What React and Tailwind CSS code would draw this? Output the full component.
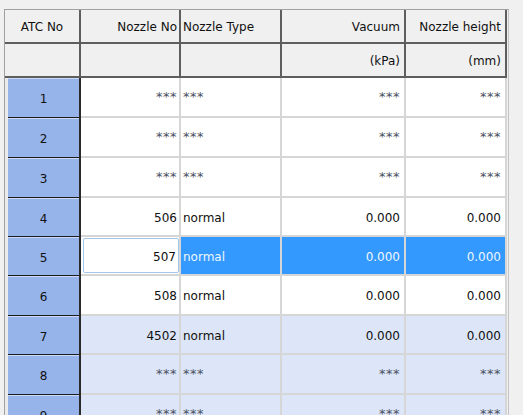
import React from "react";

const rows = [
  { n: "1", no: "***", type: "***", vac: "***", ht: "***", h: "h-[40px]", tint: false },
  { n: "2", no: "***", type: "***", vac: "***", ht: "***", h: "h-[40px]", tint: false },
  { n: "3", no: "***", type: "***", vac: "***", ht: "***", h: "h-[40px]", tint: false },
  { n: "4", no: "506", type: "normal", vac: "0.000", ht: "0.000", h: "h-[39px]", tint: false },
  { n: "5", no: "507", type: "normal", vac: "0.000", ht: "0.000", h: "h-[39px]", tint: false, sel: true },
  { n: "6", no: "508", type: "normal", vac: "0.000", ht: "0.000", h: "h-[40px]", tint: false },
  { n: "7", no: "4502", type: "normal", vac: "0.000", ht: "0.000", h: "h-[39px]", tint: true },
  { n: "8", no: "***", type: "***", vac: "***", ht: "***", h: "h-[40px]", tint: true },
  { n: "9", no: "***", type: "***", vac: "***", ht: "***", h: "h-[40px]", tint: true },
];

function Val({ v }) {
  if (v === "***") {
    return <span className="text-[13px] text-[#4a5060] tracking-[0.5px] -mt-[3px]">***</span>;
  }
  return <span>{v}</span>;
}

function HeaderRow({ cells }) {
  return (
    <div className="flex h-[34px]">
      <div className="w-[76px] shrink-0 flex items-center justify-center pt-[2px] bg-[#f0f0f0] border-r-2 border-b-2 border-[#5e5e5e]">
        {cells[0]}
      </div>
      <div className="w-[100px] shrink-0 flex items-center justify-end pr-[2px] pt-[2px] bg-[#f0f0f0] border-r-2 border-b-2 border-[#5e5e5e]">
        {cells[1]}
      </div>
      <div className="w-[101px] shrink-0 flex items-center justify-start pl-[2px] pt-[2px] bg-[#f0f0f0] border-r-2 border-b-2 border-[#5e5e5e]">
        {cells[2]}
      </div>
      <div className="w-[124px] shrink-0 flex items-center justify-end pr-[4px] pt-[2px] bg-[#f0f0f0] border-r-2 border-b-2 border-[#5e5e5e]">
        {cells[3]}
      </div>
      <div className="w-[101px] shrink-0 flex items-center justify-end pr-[4px] pt-[2px] bg-[#f0f0f0] border-r-2 border-b-2 border-[#5e5e5e]">
        {cells[4]}
      </div>
    </div>
  );
}

function DataRow({ r }) {
  const base = r.tint ? "bg-[#dce6f8]" : "bg-white";
  const selCell = r.sel ? "bg-[#3399ff] text-[#eef6ff]" : base;
  return (
    <div className={`flex ${r.h}`}>
      <div className="w-[76px] shrink-0 pl-[3px] bg-[#ebebeb] border-r-2 border-[#2a2a2a]">
        <div className="h-full flex items-center justify-center pt-[2px] bg-[#97b4ea] border-t border-t-[#c9d9f7] border-b border-b-[#1c1c1c]">
          {r.n}
        </div>
      </div>
      <div className={`w-[100px] shrink-0 ${base} border-r-2 border-b-2 border-[#d6d6d6] flex`}>
        {r.sel ? (
          <div className="flex-1 ml-[2px] mt-[1px] mb-[1px] flex items-center justify-end pr-[2px] pt-[2px] bg-white border border-[#a3c6ea] rounded-[2px]">
            {r.no}
          </div>
        ) : (
          <div className="flex-1 flex items-center justify-end pr-[2px] pt-[2px]">
            <Val v={r.no} />
          </div>
        )}
      </div>
      <div className={`w-[101px] shrink-0 ${selCell} border-r-2 border-b-2 border-[#d6d6d6] flex items-center justify-start pl-[2px] pt-[2px]`}>
        <Val v={r.type} />
      </div>
      <div className={`w-[124px] shrink-0 ${selCell} border-r-2 border-b-2 border-[#d6d6d6] flex items-center justify-end pr-[4px] pt-[2px]`}>
        <Val v={r.vac} />
      </div>
      <div className={`w-[101px] shrink-0 ${selCell} border-r-2 border-b-2 border-[#d6d6d6] flex items-center justify-end pr-[4px] pt-[2px]`}>
        <Val v={r.ht} />
      </div>
    </div>
  );
}

export default function App() {
  return (
    <div
      className="w-[523px] h-[415px] overflow-hidden bg-[#f0f0f0] pt-[9px] pl-[4px] text-[12px] leading-none text-[#101010]"
      style={{ fontFamily: '"DejaVu Sans", Verdana, sans-serif' }}
    >
      <div className="w-[505px] border-l border-t border-r border-l-[#a0a0a0] border-t-[#a0a0a0] border-r-[#c4c4c4]">
        <HeaderRow cells={["ATC No", "Nozzle No", "Nozzle Type", "Vacuum", "Nozzle height"]} />
        <HeaderRow cells={["", "", "", "(kPa)", "(mm)"]} />
        {rows.map((r) => (
          <DataRow key={r.n} r={r} />
        ))}
      </div>
    </div>
  );
}
